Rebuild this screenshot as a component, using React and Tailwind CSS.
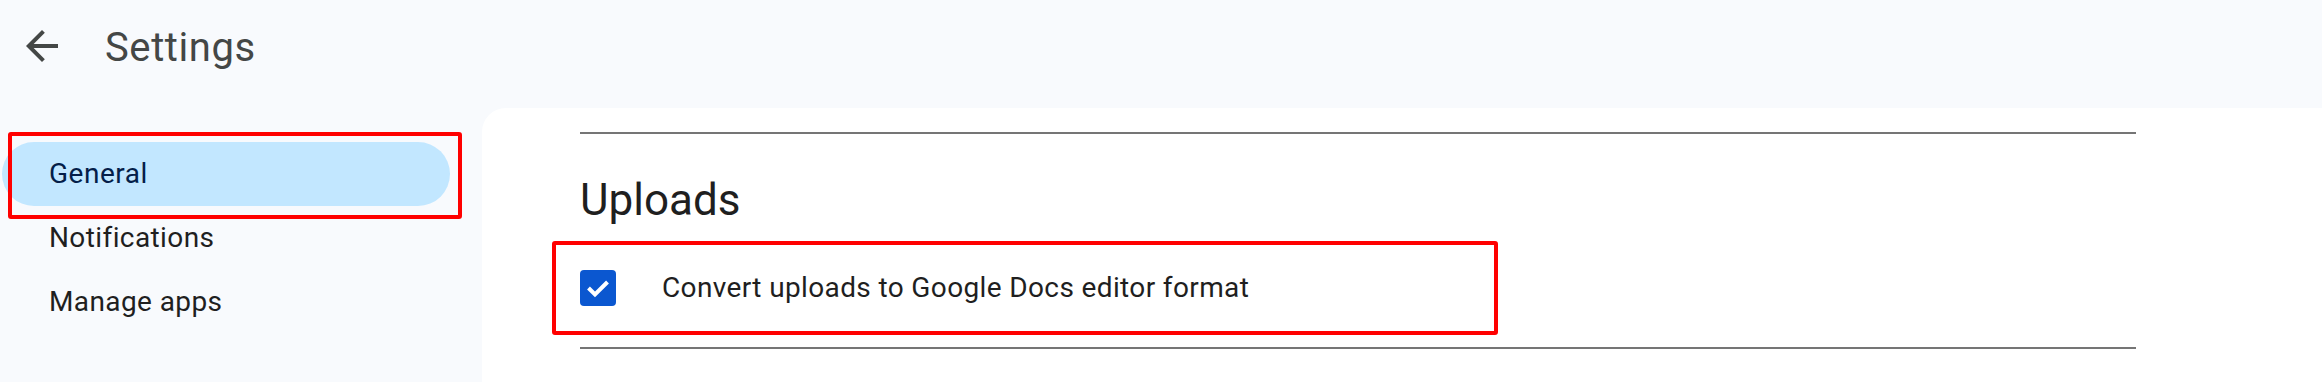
import React from 'react';

const navItems = ['General', 'Notifications', 'Manage apps'];

const BackArrow = () => (
  <svg viewBox="0 0 24 24" className="w-12 h-12 fill-[#444746] shrink-0">
    <path d="M20 11H7.83l5.59-5.59L12 4l-8 8 8 8 1.41-1.41L7.83 13H20v-2z" />
  </svg>
);

const Checkbox = () => (
  <div className="w-9 h-9 rounded-[4px] bg-[#0b57d0] shrink-0">
    <svg viewBox="0 0 36 36" className="w-9 h-9">
      <polyline
        points="8.5,18 15,24.5 27.5,12"
        fill="none"
        stroke="white"
        strokeWidth="4"
      />
    </svg>
  </div>
);

const App = () => {
  return (
    <div className="w-[2322px] h-[382px] overflow-hidden bg-[#f8fafd] flex flex-col font-['Roboto',sans-serif]">
      <header className="h-[108px] shrink-0 flex items-start pt-[22px] pl-[18px]">
        <BackArrow />
        <h1 className="ml-[39px] mt-[2px] text-[40px] leading-[48px] tracking-[0.6px] text-[#444746]">
          Settings
        </h1>
      </header>

      <div className="flex flex-1">
        <nav className="w-[482px] shrink-0 pt-[34px]">
          {navItems.map((item, i) => {
            const active = i === 0;
            return (
              <div
                key={item}
                className={
                  active
                    ? 'relative ml-[2px] w-[448px] h-16 rounded-full bg-[#c2e7ff] pl-[47px] flex items-center text-[28px] tracking-[0.5px] text-[#041e49]'
                    : 'ml-[2px] w-[448px] h-16 rounded-full pl-[47px] flex items-center text-[28px] tracking-[0.4px] text-[#1f1f1f]'
                }
              >
                {item}
                {active && (
                  <div className="absolute left-[6px] top-[-10px] w-[454px] h-[87px] border-4 border-[#ff0000] rounded-[3px]" />
                )}
              </div>
            );
          })}
        </nav>

        <main className="flex-1 bg-white rounded-tl-[24px] pl-[98px] pt-[24px]">
          <div className="w-[1556px]">
            <div className="h-[2px] bg-[#757575]" />
            <h2 className="mt-[38px] text-[44px] leading-[56px] text-[#1f1f1f]">
              Uploads
            </h2>
            <div className="relative mt-[20px] h-20 flex items-center">
              <Checkbox />
              <span className="ml-[46px] text-[28px] tracking-[0.37px] text-[#1f1f1f]">
                Convert uploads to Google Docs editor format
              </span>
              <div className="absolute left-[-28px] top-[-7px] w-[946px] h-[94px] border-4 border-[#ff0000] rounded-[3px]" />
            </div>
            <div className="mt-[19px] h-[2px] bg-[#757575]" />
          </div>
        </main>
      </div>
    </div>
  );
};

export default App;
